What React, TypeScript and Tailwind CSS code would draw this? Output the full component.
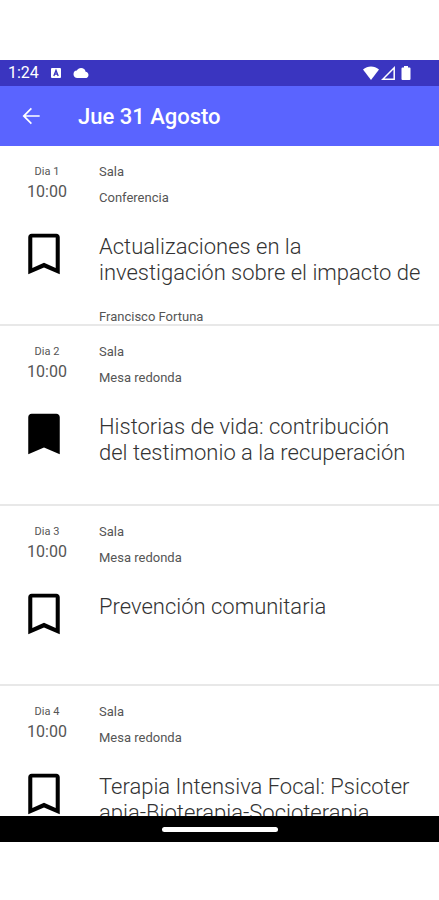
import { useState } from 'react';

interface Session {
    id: number;
    day: string;
    time: string;
    room: string;
    type: string;
    title: string;
    speaker?: string;
    saved: boolean;
}

const initialSessions: Session[] = [
    {
        id: 1,
        day: 'Dia 1',
        time: '10:00',
        room: 'Sala',
        type: 'Conferencia',
        title: 'Actualizaciones en la\ninvestigación sobre el impacto de',
        speaker: 'Francisco Fortuna',
        saved: false,
    },
    { id: 2, day: 'Dia 2', time: '10:00', room: 'Sala', type: 'Mesa redonda', title: 'Historias de vida: contribución\ndel testimonio a la recuperación', saved: true },
    { id: 3, day: 'Dia 3', time: '10:00', room: 'Sala', type: 'Mesa redonda', title: 'Prevención comunitaria', saved: false },
    { id: 4, day: 'Dia 4', time: '10:00', room: 'Sala', type: 'Mesa redonda', title: 'Terapia Intensiva Focal: Psicoter\napia-Bioterapia-Socioterapia', saved: false },
];

function StatusBar() {
    return (
        <div className="flex h-[26px] shrink-0 items-center bg-[#3a35c0] pl-2 pr-7 text-white">
            <span className="text-base">1:24</span>
            <svg className="ml-3 h-2.5 w-2.5" viewBox="0 0 10 10" fill="none">
                <rect width="10" height="10" rx="1" fill="#fff" />
                <path d="M2.8 8 5 2.4 7.2 8M3.6 6.2h2.8" stroke="#3a35c0" strokeWidth="1.3" />
            </svg>
            <svg className="ml-3 h-2.5 w-4" viewBox="0 4 24 16" fill="currentColor">
                <path d="M19.35 10.04A7.49 7.49 0 0 0 12 4C9.11 4 6.6 5.64 5.35 8.04A5.994 5.994 0 0 0 0 14c0 3.31 2.69 6 6 6h13c2.76 0 5-2.24 5-5 0-2.64-2.05-4.78-4.65-4.96z" />
            </svg>
            <svg className="ml-auto h-3.5 w-4" viewBox="0 0 16 14" fill="currentColor">
                <path d="M0 3.6C4.6-.6 11.4-.6 16 3.6L8 14z" />
            </svg>
            <svg className="ml-0.5 h-3.5 w-3.5" viewBox="0 0 14 14" fill="none" stroke="currentColor" strokeWidth="1.5">
                <path d="M1.8 13.2 13.2 1.8v11.4z" />
            </svg>
            <svg className="ml-1.5 h-3.5 w-2.5" viewBox="0 0 10 14" fill="currentColor">
                <path d="M3 0h4v1.5h1.5A1 1 0 0 1 9.5 2.5V13a1 1 0 0 1-1 1h-7a1 1 0 0 1-1-1V2.5a1 1 0 0 1 1-1H3z" />
            </svg>
        </div>
    );
}

function BookmarkIcon({ filled }: { filled: boolean }) {
    return (
        <svg className="h-[54px] w-[54px]" viewBox="0 0 24 24" fill="#000">
            {filled ? (
                <path d="M17.5 3h-11C5.7 3 5 3.7 5 4.5V21l7-3 7 3V4.5c0-.8-.7-1.5-1.5-1.5z" />
            ) : (
                <path d="M17.5 3h-11C5.7 3 5 3.7 5 4.5V21l7-3 7 3V4.5c0-.8-.7-1.5-1.5-1.5zM17.2 18.2 12 15.9l-5.2 2.3V4.7h10.4z" />
            )}
        </svg>
    );
}

function SessionRow({ session, onToggle }: { session: Session; onToggle: () => void }) {
    return (
        <li className="flex h-45 shrink-0 overflow-hidden border-b-2 border-[#e8e8e8] text-[#555]">
            <div className="flex w-[94px] shrink-0 flex-col items-center pt-[18px]">
                <span className="text-[11px] leading-4">{session.day}</span>
                <span className="text-base leading-6">{session.time}</span>
                <button type="button" onClick={onToggle} aria-label="Guardar" aria-pressed={session.saved} className="mt-[23px] mr-1.5 cursor-pointer">
                    <BookmarkIcon filled={session.saved} />
                </button>
            </div>
            <div className="min-w-0 flex-1 pt-[18px] pl-[5px] text-[13px] leading-4">
                <p>{session.room}</p>
                <p className="mt-2.5">{session.type}</p>
                <h2 className="mt-7 h-[75px] whitespace-pre-line text-[22px] leading-[26px] font-light text-[#333]">{session.title}</h2>
                {session.speaker && <p>{session.speaker}</p>}
            </div>
        </li>
    );
}

export default function App() {
    const [sessions, setSessions] = useState(initialSessions);

    const toggleSaved = (id: number) => {
        setSessions((prev) => prev.map((s) => (s.id === id ? { ...s, saved: !s.saved } : s)));
    };

    return (
        <div className="flex h-screen flex-col bg-white pt-15 pb-[58px] font-[Roboto,sans-serif]">
            <StatusBar />
            <header className="flex h-15 shrink-0 items-center bg-[#5a64ff] pl-[18px] text-white">
                <button type="button" aria-label="Volver" className="cursor-pointer">
                    <svg className="h-[26px] w-[26px]" viewBox="0 0 24 24" fill="currentColor">
                        <path d="M20 11.2H7.2l5.7-5.7L11.8 4.4 4.2 12l7.6 7.6 1.1-1.1-5.7-5.7H20z" />
                    </svg>
                </button>
                <h1 className="ml-[34px] text-[22px] font-medium">Jue 31 Agosto</h1>
            </header>
            <ul className="flex min-h-0 flex-1 flex-col overflow-hidden">
                {sessions.map((session) => (
                    <SessionRow key={session.id} session={session} onToggle={() => toggleSaved(session.id)} />
                ))}
            </ul>
            <div className="flex h-[26px] shrink-0 items-center justify-center bg-black">
                <div className="h-[5px] w-[116px] rounded-full bg-white" />
            </div>
        </div>
    );
}
